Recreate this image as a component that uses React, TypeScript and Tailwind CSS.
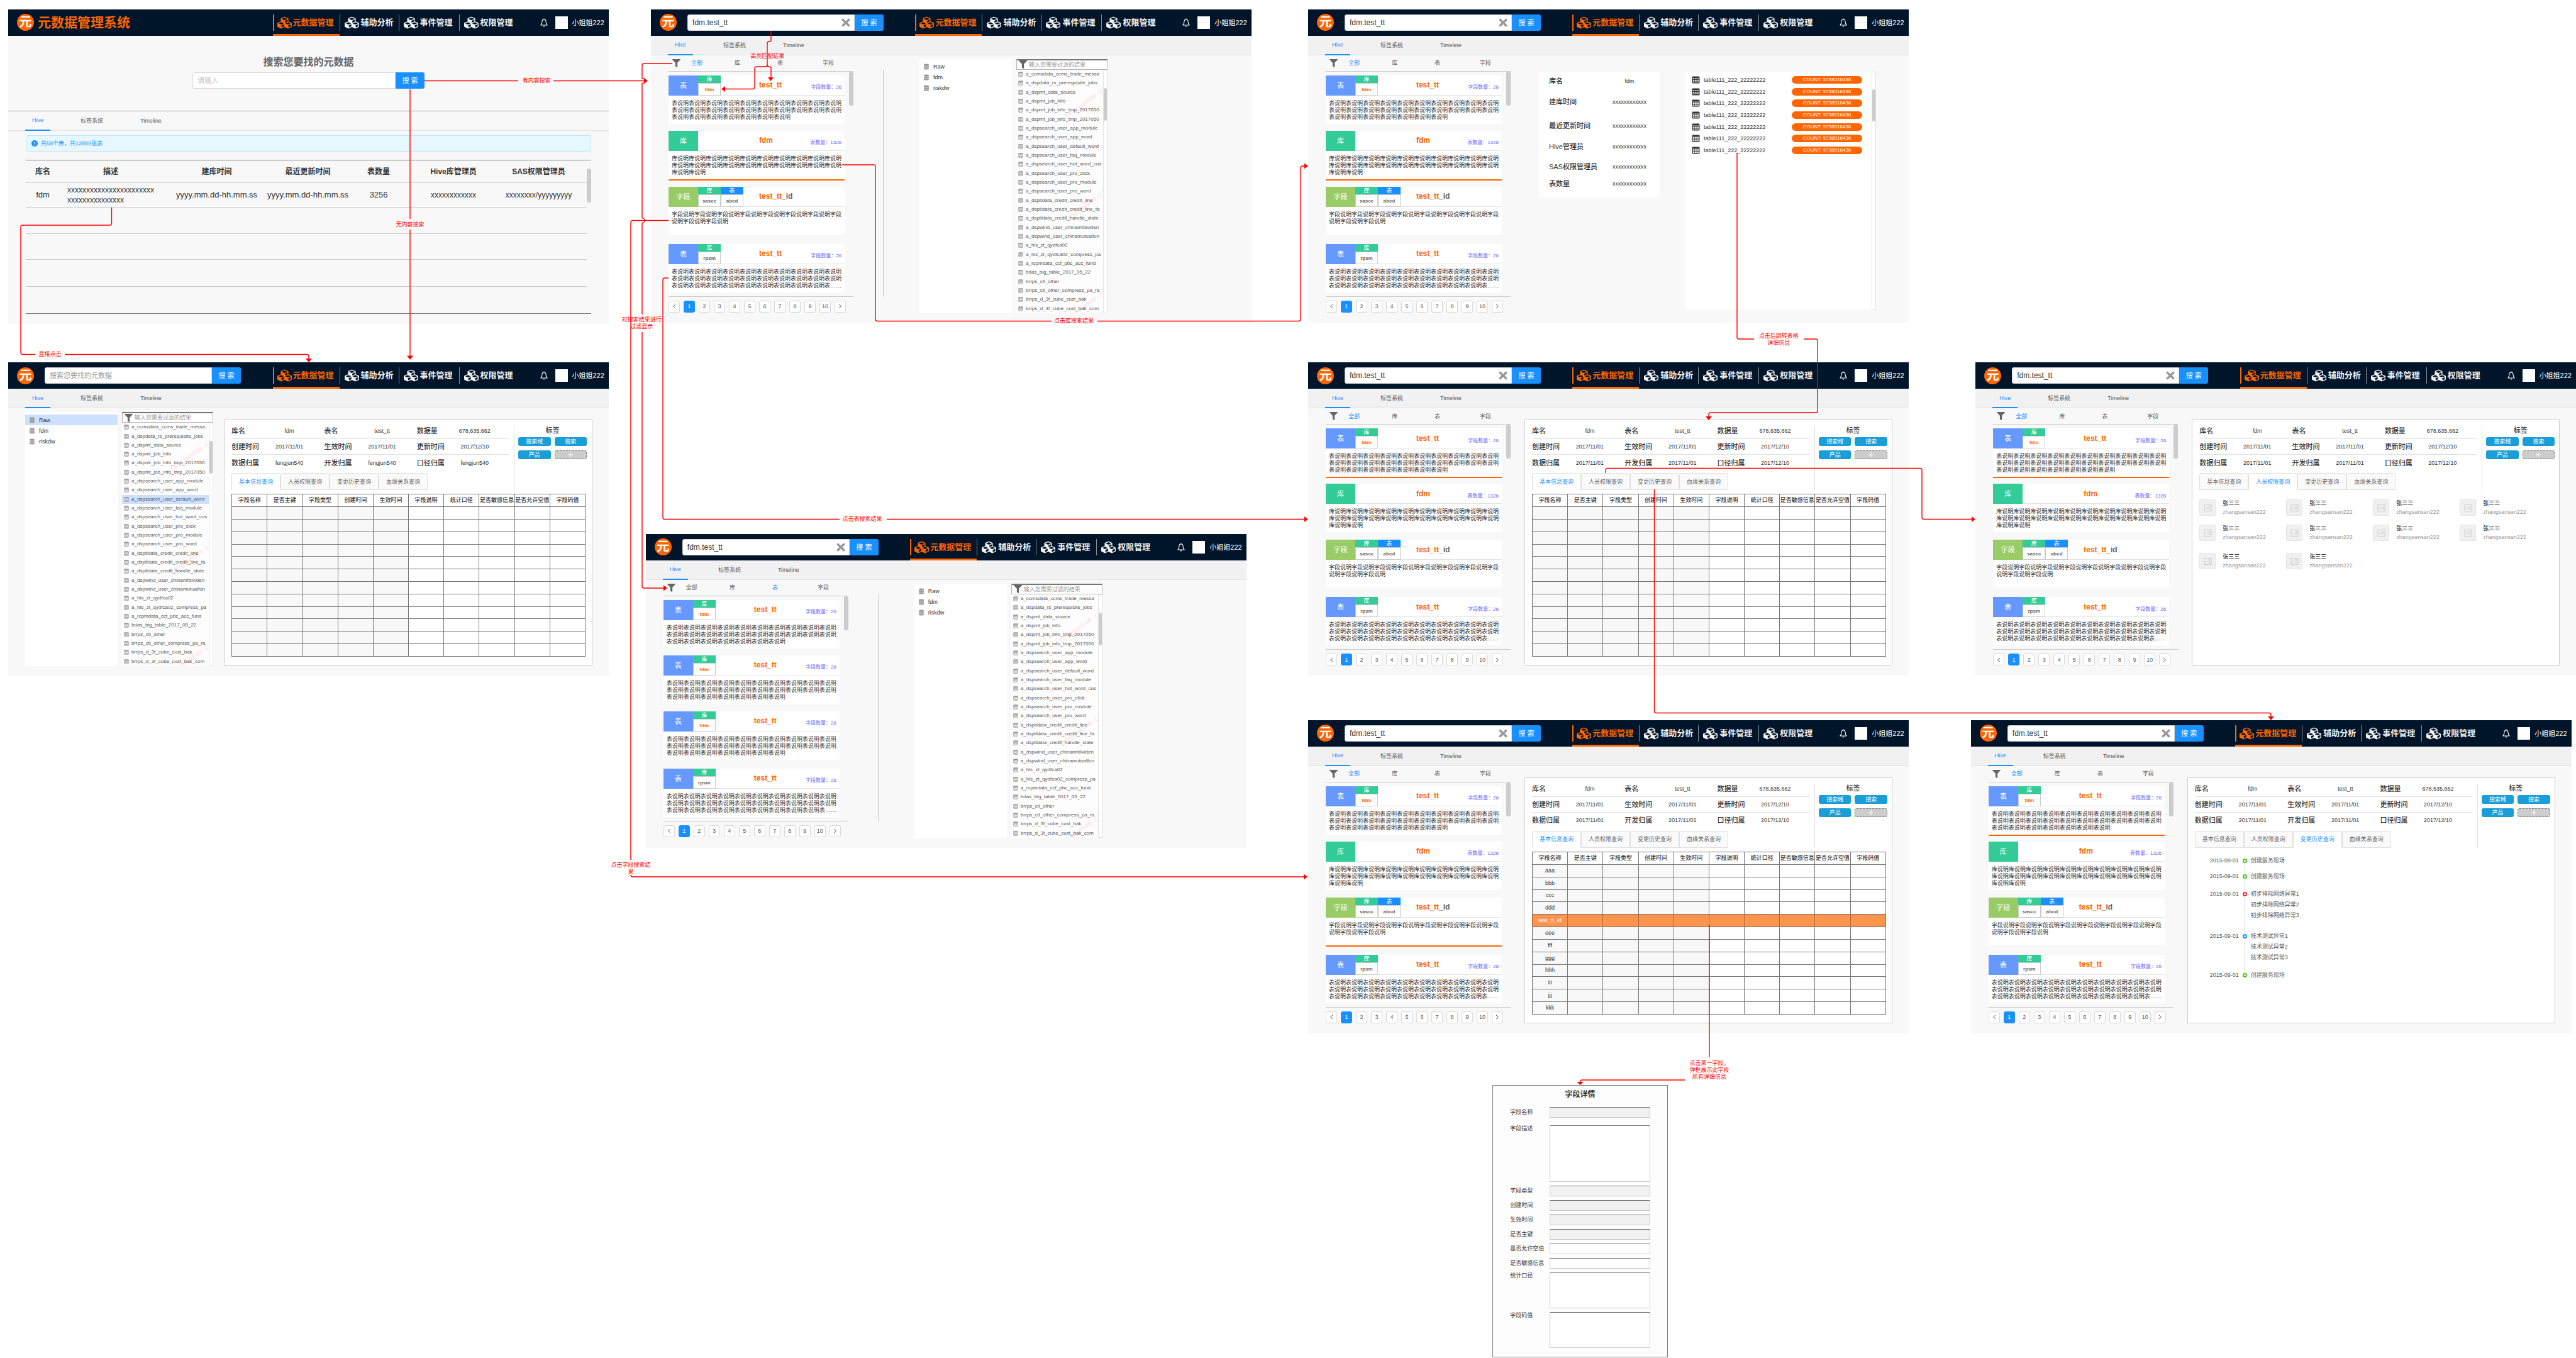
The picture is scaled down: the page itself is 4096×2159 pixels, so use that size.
import React from "react";
import { FaDatabase, FaFilter } from "react-icons/fa";

type Kind = "table" | "lib" | "field";

interface Result {
  kind: Kind;
  tags: { kind: Kind; value: string; hit?: boolean }[];
  hit: string;
  rest?: string;
  count?: string;
  text: string;
}

const kindLabel: Record<Kind, string> = { table: "表", lib: "库", field: "字段" };
const kindBg: Record<Kind, string> = {
  table: "bg-[#6699ff]",
  lib: "bg-[#33cc99]",
  field: "bg-[#99cc66]",
};
const tagBg: Record<Kind, string> = {
  table: "bg-[#1890ff]",
  lib: "bg-[#33cc99]",
  field: "bg-[#99cc66]",
};

const tableResult: Result = {
  kind: "table",
  tags: [{ kind: "lib", value: "fdm", hit: true }],
  hit: "test_tt",
  count: "字段数量：26",
  text: "表说明".repeat(27),
};
const longTableResult: Result = {
  kind: "table",
  tags: [{ kind: "lib", value: "rpsm" }],
  hit: "test_tt",
  count: "字段数量：26",
  text: "表说明".repeat(29) + "表……",
};
const libResult: Result = {
  kind: "lib",
  tags: [],
  hit: "fdm",
  count: "表数量：1326",
  text: "库说明".repeat(22),
};
const fieldResult: Result = {
  kind: "field",
  tags: [
    { kind: "lib", value: "sascc" },
    { kind: "table", value: "abcd" },
  ],
  hit: "test_tt",
  rest: "_id",
  text: "字段说明".repeat(10),
};
const mixedResults = [tableResult, libResult, fieldResult, longTableResult];
const tableResults = [tableResult, tableResult, tableResult, longTableResult];

const hiveTables = [
  "a_ccmsdata_ccms_trade_messa",
  "a_dspdata_rs_prerequisite_jobs",
  "a_dspmt_data_source",
  "a_dspmt_job_info",
  "a_dspmt_job_info_tmp_2017050",
  "a_dspmt_job_info_tmp_2017050",
  "a_dspsearch_user_app_module",
  "a_dspsearch_user_app_word",
  "a_dspsearch_user_default_word",
  "a_dspsearch_user_faq_module",
  "a_dspsearch_user_hot_word_cus",
  "a_dspsearch_user_pro_click",
  "a_dspsearch_user_pro_module",
  "a_dspsearch_user_pro_word",
  "a_dsptldata_credit_credit_line",
  "a_dsptldata_credit_credit_line_fa",
  "a_dsptldata_credit_handle_state",
  "a_dspwind_user_chinamfdividen",
  "a_dspwind_user_chinamutualfun",
  "a_his_zt_qydfca02",
  "a_his_zt_qydfca02_compress_pa",
  "a_rcpmdata_ccf_pbc_acc_fund",
  "bdas_big_table_2017_05_22",
  "brrps_ctl_other",
  "brrps_ctl_other_compress_pa_ra",
  "brrps_d_3f_cube_cust_bak",
  "brrps_d_3f_cube_cust_bak_com",
];

const fieldColumns = [
  "字段名称",
  "是否主键",
  "字段类型",
  "创建时间",
  "生效时间",
  "字段说明",
  "统计口径",
  "是否敏感信息",
  "是否允许空值",
  "字段码值",
];

function Cubes() {
  return (
    <svg viewBox="0 0 2176 1792" className="h-[20px] w-[23px] shrink-0" fill="currentColor" aria-hidden="true">
      <path d="M640 1632l384-192v-314l-384 164v342zm-64-454l404-173-404-173-404 173zm1088 454l384-192v-314l-384 164v342zm-64-454l404-173-404-173-404 173zm-448-293l384-165v-266l-384 164v267zm-64-379l441-189-441-189-441 189zm1088 518v416q0 36-19 67t-52 47l-448 224q-25 14-57 14t-57-14l-448-224q-4-2-7-4-2 2-7 4l-448 224q-25 14-57 14t-57-14l-448-224q-33-16-52-47t-19-67v-416q0-38 21.5-70t56.5-48l434-186v-400q0-38 21.5-70t56.5-48l448-192q23-10 50-10t50 10l448 192q35 16 56.5 48t21.5 70v400l434 186q36 16 57 48t21 70z" />
    </svg>
  );
}

function Bell() {
  return (
    <svg viewBox="0 0 24 24" className="size-[14px]" fill="none" stroke="currentColor" strokeWidth="1.8" strokeLinejoin="round" aria-hidden="true">
      <path d="M12 3.2c-3.4 0-5 2.6-5.2 6-.2 4.200-.8 6.600-3.600 9.600h17.600c-2.800-3-3.400-5.400-3.600-9.600-.2-3.400-1.800-6-5.200-6Z" />
      <path d="M12 1v2.200M10.200 20.800c.2 1 .9 1.600 1.800 1.600s1.600-.6 1.800-1.600" />
    </svg>
  );
}

function GridGlyph({ className, tall }: { className: string; tall?: boolean }) {
  const cellHeight = tall ? 3 : 3.4;
  const pitch = tall ? 5 : 5.2;
  return (
    <svg viewBox="0 0 24 24" className={className} preserveAspectRatio="none" aria-hidden="true">
      <rect x="1" y="1" width="22" height="22" rx="2.5" fill="currentColor" />
      {[0, 1, 2].map((r) =>
        [0, 1, 2].map((c) => (
          <rect key={`${r}-${c}`} x={3.4 + c * 6.2} y={7 + r * pitch} width="4.6" height={cellHeight} fill="#fff" />
        ))
      )}
    </svg>
  );
}

function Header({ search, wide, line }: { search?: { value?: string; placeholder?: string }; wide?: boolean; line?: boolean }) {
  const items = [
    { label: "辅助分析", cls: "w-[94px] gap-[3px]" },
    { label: "事件管理", cls: "w-[96px] gap-[3px]" },
    { label: "权限管理", cls: "w-[87px] gap-[3px]" },
  ];
  return (
    <header className="flex h-[42px] items-center bg-[#001529] pl-[14px] pr-[7px] text-white">
      <span className="flex size-[27px] shrink-0 items-center justify-center rounded-full bg-[#ff6600] text-[20px] font-bold leading-[27px]">
        元
      </span>
      {wide && <h1 className="ml-[6px] whitespace-nowrap text-[21px] font-bold leading-[27px] text-[#ff6600]">元数据管理系统</h1>}
      {search && (
        <form className="ml-[17px] flex h-[26px] w-[312px]">
          <div className="flex flex-1 items-center rounded-l-[3px] border border-[#d9d9d9] bg-white pl-[7px] pr-[6px]">
            <input
              type="text"
              aria-label="搜索元数据"
              defaultValue={search.value}
              placeholder={search.placeholder}
              className={
                search.value
                  ? "h-full min-w-0 flex-1 text-[12px] text-[#333] outline-none"
                  : "h-full min-w-0 flex-1 text-[11px] text-[#333] outline-none placeholder:text-[#999]"
              }
            />
            {search.value && (
              <button type="button" aria-label="清空" className="text-[#999]">
                <svg viewBox="0 0 14 14" className="size-[14px]" stroke="currentColor" strokeWidth="3.6" strokeLinecap="round" aria-hidden="true">
                  <path d="M2.4 2.4l9.2 9.2M11.600 2.4l-9.200 9.200" />
                </svg>
              </button>
            )}
          </div>
          <button type="button" className="w-[46px] rounded-r-[3px] bg-[#1890ff] text-[11px] leading-[26px] text-white">
            搜 索
          </button>
        </form>
      )}
      <nav className="ml-auto mr-[41px] flex h-full items-center">
        <a href="#meta" className="relative flex h-full w-[106px] items-center gap-[2px] pl-[7px] text-[#ff6600]">
          <span className="absolute left-0 top-[8px] h-[26px] w-[2px] bg-[#ff6600]" />
          <Cubes />
          <span className="whitespace-nowrap text-[13px] font-bold leading-[20px]">元数据管理</span>
          <span className="absolute inset-x-0 bottom-0 h-[3px] bg-[#ff6600]" />
        </a>
        {items.map((item) => (
          <a key={item.label} href="#nav" className={`flex h-[26px] items-center border-l border-[#8c8c8c] pl-[7px] text-[#f2f2f2] ${item.cls}`}>
            <Cubes />
            <span className="whitespace-nowrap text-[13px] font-bold leading-[20px]">{item.label}</span>
          </a>
        ))}
      </nav>
      <button type="button" aria-label="通知" className="shrink-0 text-white">
        <Bell />
      </button>
      <span className="ml-[11px] flex size-[20px] shrink-0 items-center bg-white">
        {line && <span className="h-px w-full bg-[#fde3df]" />}
      </span>
      <span className="ml-[7px] whitespace-nowrap text-[11px] leading-[20px]">小姐姐222</span>
    </header>
  );
}

function SystemTabs({ plain }: { plain?: boolean }) {
  return (
    <div
      role="tablist"
      className={`flex h-[31px] gap-[37px] border-b border-[#e4e4e4] pl-[27px] text-[9px] text-[#595959] ${plain ? "bg-[#f8f8f8]" : "bg-[#f1f1f1]"}`}
    >
      <button type="button" role="tab" aria-selected="true" className="h-[31px] border-b-2 border-[#1890ff] px-[11px] text-[#1890ff]">
        Hive
      </button>
      <button type="button" role="tab" className="px-[11px]">
        标签系统
      </button>
      <button type="button" role="tab" className="px-[11px]">
        Timeline
      </button>
    </div>
  );
}

function Board({ className, children }: { className: string; children: React.ReactNode }) {
  return <section className={`absolute w-[23.31%] overflow-hidden bg-[#f8f8f8] pb-[16px] ${className}`}>{children}</section>;
}

function ResultCard({ item, active }: { item: Result; active: boolean }) {
  return (
    <article className={`self-start bg-white ${active ? "border-b-2 border-[#ff6600]" : ""}`}>
      <div className="flex h-[32px]">
        <span className={`flex w-[47px] shrink-0 items-center justify-center text-[11px] text-white ${kindBg[item.kind]}`}>
          {kindLabel[item.kind]}
        </span>
        <div className="flex w-[97px] shrink-0 border-b border-[#e4e4e4]">
          {item.tags.map((tag) => (
            <span key={tag.value} className="flex h-[32px] w-[36px] flex-col text-center">
              <span className={`h-[12px] text-[9px] leading-[12px] text-white ${tagBg[tag.kind]}`}>{kindLabel[tag.kind]}</span>
              <span
                className={`h-[20px] border border-[#ccc] bg-white text-[8px] font-bold leading-[19px] ${tag.hit ? "text-[#ff6600]" : "text-[#666]"}`}
              >
                {tag.value}
              </span>
            </span>
          ))}
        </div>
        <div className="flex flex-1 items-center justify-between border-b border-[#e4e4e4] pr-[5px]">
          <h3 className="text-[12px] font-bold text-[#666]">
            <span className="text-[#ff6600]">{item.hit}</span>
            {item.rest}
          </h3>
          <span className="pt-[8px] text-[8px] text-[#6666ff]">{item.count}</span>
        </div>
      </div>
      <p className="mx-[5px] mb-[5px] mt-[7px] min-h-[32px] break-all text-[9px] leading-[11px] text-[#333]">{item.text}</p>
    </article>
  );
}

function Results({ items, filter = "全部", active }: { items: Result[]; filter?: string; active?: number }) {
  const filters = [
    { label: "全部", cls: "ml-[17px]" },
    { label: "库", cls: "ml-[51px]" },
    { label: "表", cls: "ml-[59px]" },
    { label: "字段", cls: "ml-[63px]" },
  ];
  return (
    <div className="w-[294px] shrink-0">
      <div className="flex h-[25px] items-center pl-[6px] text-[9px] text-[#666]">
        <FaFilter className="size-[13px]" />
        {filters.map((f) => (
          <button key={f.label} type="button" className={`${f.cls} ${f.label === filter ? "text-[#1890ff]" : ""}`}>
            {f.label}
          </button>
        ))}
      </div>
      <div className="flex h-[359px] justify-between border-y border-[#ccc]">
        <div className="grid w-[280px] grid-rows-[88px_89px_91px_77px] pt-[6px]">
          {items.map((item, i) => (
            <ResultCard key={i} item={item} active={i === active} />
          ))}
        </div>
        <span className="h-[54px] w-[7px] rounded-[3px] bg-[#ccc]" />
      </div>
      <div className="mt-[6px] flex gap-[6px] text-[9px] text-[#595959]">
        {["‹", "1", "2", "3", "4", "5", "6", "7", "8", "9", "10", "›"].map((p) => (
          <button
            key={p}
            type="button"
            aria-label={p === "‹" ? "上一页" : p === "›" ? "下一页" : `第${p}页`}
            className={`flex h-[19px] w-[18px] items-center justify-center rounded-[3px] border ${
              p === "1" ? "border-[#1890ff] bg-[#1890ff] text-white" : "border-[#d9d9d9] bg-white"
            }`}
          >
            {p === "‹" || p === "›" ? (
              <svg viewBox="0 0 8 8" className="size-[8px]" fill="none" stroke="currentColor" aria-hidden="true">
                <path d={p === "‹" ? "M6 1 2.500 4 6 7" : "M2 1l3.500 3L2 7"} />
              </svg>
            ) : (
              p
            )}
          </button>
        ))}
      </div>
    </div>
  );
}

function Explorer({ db, table }: { db?: string; table?: string }) {
  return (
    <div className="mt-[6px] flex h-[404px] gap-[7px]">
      <ul className="w-[147px] bg-white pt-[4px] text-[9px] text-[#333]">
        {["Raw", "fdm", "riskdw"].map((name) => (
          <li key={name} className={`flex h-[17px] items-center gap-[7px] pl-[7px] ${name === db ? "bg-[#cce0ff]" : ""}`}>
            <FaDatabase className="h-[10px] w-[8px] text-[#999]" />
            {name}
          </li>
        ))}
      </ul>
      <div className="flex w-[145px] flex-col bg-[#fdfdfd]">
        <label className="flex h-[17px] shrink-0 items-center gap-[3px] border border-t-2 border-[#b5b5b5] border-t-[#767676] bg-white pl-[3px]">
          <FaFilter className="size-[13px] shrink-0 text-[#666]" />
          <input
            type="text"
            aria-label="过滤表"
            placeholder="输入您需要过滤的结果"
            className="h-[12px] min-w-0 flex-1 text-[9px] leading-[12px] outline-none placeholder:text-[#999]"
          />
        </label>
        <div className="flex min-h-0 flex-1">
          <ul className="relative flex min-w-0 flex-1 flex-col overflow-hidden text-[8px] text-[#595959]">
            {hiveTables.map((name, i) => (
              <li key={i} className={`flex min-h-0 flex-1 items-center pl-[3px] ${name === table ? "bg-[#cce0ff]" : ""}`}>
                <GridGlyph className="size-[8px] shrink-0 text-[#999]" />
                <span className="ml-[4px] whitespace-nowrap leading-[12px]">{name}</span>
              </li>
            ))}
            {["top-[47px]", "top-[211px]", "top-[370px]"].map((top) => (
              <li
                key={top}
                aria-hidden="true"
                className={`absolute left-[71px] ${top} -rotate-[35deg] whitespace-nowrap font-['Liberation_Mono'] text-[10px] italic text-[#ff0000]/15`}
              >
                fengjun540-17
              </li>
            ))}
          </ul>
          <div className="w-[7px] border border-[#e4e4e4] bg-white pt-[28px]">
            <span className="block h-[52px] rounded-[3px] bg-[#ccc]" />
          </div>
        </div>
      </div>
    </div>
  );
}

function Split() {
  return <div className="ml-[47px] mt-[23px] h-[361px] w-px bg-[#ccc]" />;
}

const dates = ["2017/11/01", "2017/11/01", "2017/12/10"];
const owners = ["fengjun540", "fengjun540", "fengjun540"];

function TableDetail({ tab, owner, children }: { tab: number; owner?: boolean; children: React.ReactNode }) {
  const last = owner ? owners : dates;
  const rows = [
    [["库名", "fdm"], ["表名", "test_tt"], ["数据量", "678,635,662"]],
    [["创建时间", dates[0]], ["生效时间", dates[1]], ["更新时间", dates[2]]],
    [["数据归属", last[0]], ["开发归属", last[1]], ["口径归属", last[2]]],
  ];
  const tabs = ["基本信息查询", "人员权限查询", "变更历史查询", "血缘关系查询"];
  return (
    <div className="mr-[26px] mt-[18px] min-h-[386px] flex-1 border border-[#ccc] bg-white">
      <div className="flex">
        <div className="w-[453px] pl-[11px] pt-[5px]">
          <dl>
            {rows.map((row, i) => (
              <div key={i} className={`flex h-[25px] items-center ${i < 2 ? "border-b border-[#e0e0e0]" : ""}`}>
                {row.map(([k, v]) => (
                  <div key={k} className="flex w-[151px] items-center">
                    <dt className="w-[60px] whitespace-nowrap text-[11px] font-medium text-[#333]">{k}</dt>
                    <dd className="w-[64px] text-center text-[9px] text-[#333]">{v}</dd>
                  </div>
                ))}
              </div>
            ))}
          </dl>
          <div role="tablist" className="mt-[4px] flex">
            {tabs.map((t, i) => (
              <button
                key={t}
                type="button"
                role="tab"
                aria-selected={i === tab}
                className={`h-[27px] w-[78px] rounded-t-[3px] border border-[#e0e0e0] text-[9px] ${
                  i === tab ? "border-b-white bg-white text-[#1890ff]" : "bg-[#fafafa] text-[#666]"
                }`}
              >
                {t}
              </button>
            ))}
          </div>
        </div>
        <aside className="ml-[7px] mt-[9px] border-l border-[#e0e0e0] pl-[6px]">
          <h3 className="text-center text-[11px] font-medium leading-[14px] text-[#333]">标签</h3>
          <div className="mt-[4px] grid w-[109px] grid-cols-2 gap-x-[6px] gap-y-[7px] text-[9px] leading-[14px] text-white">
            {["搜索域", "搜索", "产品"].map((t) => (
              <button key={t} type="button" className="h-[14px] rounded-[3px] bg-[#199ed8]">
                {t}
              </button>
            ))}
            <button
              type="button"
              aria-label="添加标签"
              className="flex h-[14px] items-center justify-center rounded-[3px] border border-dashed border-[#777] bg-[#ccc]"
            >
              <svg viewBox="0 0 8 8" className="size-[8px]" stroke="currentColor" aria-hidden="true">
                <path d="M4 0v8M0 4h8" />
              </svg>
            </button>
          </div>
        </aside>
      </div>
      {children}
    </div>
  );
}

function FieldTable({ names, highlight }: { names?: string[]; highlight?: number }) {
  return (
    <table className="ml-[11px] mt-[6px] h-[259px] w-[563px] table-fixed border-collapse text-center text-[9px] leading-[11px] text-[#333]">
      <thead>
        <tr>
          {fieldColumns.map((c) => (
            <th key={c} className="h-[20px] whitespace-nowrap border border-[#777] p-0 font-medium">
              {c}
            </th>
          ))}
        </tr>
      </thead>
      <tbody>
        {Array.from({ length: 12 }).map((_, r) => (
          <tr key={r} className={r === highlight ? "bg-[#ff944d] text-white" : ""}>
            {fieldColumns.map((c, i) => (
              <td
                key={c}
                className={`h-[19px] border p-0 ${r === highlight ? "border-x-[#b36b3b] border-y-[#777]" : "border-[#777]"} ${
                  i < 5 && r !== highlight ? "bg-[#f8f8f8]" : ""
                }`}
              >
                {i === 0 ? names?.[r] : null}
              </td>
            ))}
          </tr>
        ))}
      </tbody>
    </table>
  );
}

function HomeBoard() {
  const cols = ["w-[54px]", "w-[162px]", "w-[160px]", "w-[145px]", "w-[80px]", "w-[158px]", ""];
  const heads = ["库名", "描述", "建库时间", "最近更新时间", "表数量", "Hive库管理员", "SAS权限管理员"];
  const pads = ["", "", "pl-[15px]", "", "", "", "pr-[20px]"];
  return (
    <Board className="left-[0.32%] top-[0.69%]">
      <Header wide line />
      <form className="flex h-[120px] flex-col items-center border-b border-[#999] pt-[32px]">
        <label htmlFor="home-search" className="text-[16px] font-bold leading-[20px] text-[#666]">
          搜索您要找的元数据
        </label>
        <div className="mt-[6px] flex h-[26px] w-[369px]">
          <input
            id="home-search"
            type="text"
            placeholder="请输入"
            className="min-w-0 flex-1 rounded-l-[3px] border border-[#d9d9d9] bg-white px-[7px] text-[11px] outline-none placeholder:text-[#bfbfbf]"
          />
          <button type="button" className="w-[46px] rounded-r-[3px] bg-[#1890ff] text-[11px] text-white">
            搜 索
          </button>
        </div>
      </form>
      <SystemTabs plain />
      <div className="mx-[28px] mt-[7px] flex h-[26px] items-center gap-[5px] rounded-[3px] border border-[#bae7ff] bg-[#e6f7ff] pl-[8px] text-[9px] text-[#1890ff]">
        <span className="flex size-[10px] items-center justify-center rounded-full bg-[#1890ff] text-[8px] font-bold leading-[10px] text-white">i</span>
        共58个库，共12888张表
      </div>
      <div className="mx-[28px] mt-[13px] flex border-y border-[#777] pb-[42px]">
        <table className="flex-1 table-fixed border-collapse text-center text-[#333]">
          <colgroup>
            {cols.map((c, i) => (
              <col key={i} className={c} />
            ))}
          </colgroup>
          <thead>
            <tr className="h-[36px] border-b border-[#ccc] text-[12px]">
              {heads.map((h, i) => (
                <th key={h} className={`whitespace-nowrap p-0 font-bold ${pads[i]}`}>
                  {h}
                </th>
              ))}
            </tr>
          </thead>
          <tbody className="text-[13px]">
            <tr className="h-[39px] border-b border-[#ccc]">
              <td className="p-0">fdm</td>
              <td className="p-0 pl-[12px] text-left text-[12px] leading-[16px]">
                xxxxxxxxxxxxxxxxxxxxxxx
                <br />
                xxxxxxxxxxxxxxx
              </td>
              <td className="whitespace-nowrap p-0 pl-[15px]">yyyy.mm.dd-hh.mm.ss</td>
              <td className="whitespace-nowrap p-0">yyyy.mm.dd-hh.mm.ss</td>
              <td className="p-0">3256</td>
              <td className="p-0 text-[12px]">xxxxxxxxxxxx</td>
              <td className="p-0 pr-[20px] text-[12px]">xxxxxxxx/yyyyyyyyy</td>
            </tr>
            <tr className="h-[42px] border-b border-[#ccc]">
              <td colSpan={7} />
            </tr>
            <tr className="h-[41px] border-b border-[#ccc]">
              <td colSpan={7} />
            </tr>
            <tr className="h-[43px] border-b border-[#ccc]">
              <td colSpan={7} />
            </tr>
          </tbody>
        </table>
        <span className="mt-[13px] h-[54px] w-[7px] rounded-[3px] bg-[#ccc]" />
      </div>
    </Board>
  );
}

function SearchBoard({ className, line, children }: { className: string; line?: boolean; children: React.ReactNode }) {
  return (
    <Board className={className}>
      <Header search={{ value: "fdm.test_tt" }} line={line} />
      <SystemTabs />
      <div className="flex pl-[28px]">{children}</div>
    </Board>
  );
}

function LibraryDetail() {
  const rows = [
    ["库名", "fdm"],
    ["建库时间", "xxxxxxxxxxxx"],
    ["最近更新时间", "xxxxxxxxxxxx"],
    ["Hive管理员", "xxxxxxxxxxxx"],
    ["SAS权限管理员", "xxxxxxxxxxxx"],
    ["表数量", "xxxxxxxxxxxx"],
  ];
  return (
    <>
      <dl className="ml-[45px] mt-[26px] grid h-[200px] w-[192px] grid-rows-[31px_35px_40px_26px_38px_17px] bg-white pl-[16px] text-[#333]">
        {rows.map(([k, v]) => (
          <div key={k} className="flex items-center">
            <dt className="w-[96px] whitespace-nowrap text-[11px] font-medium">{k}</dt>
            <dd className="w-[64px] text-center text-[9px]">{v}</dd>
          </div>
        ))}
      </dl>
      <div className="ml-[40px] mt-[26px] flex h-[378px] w-[304px] bg-white">
        <ul className="flex h-[131px] flex-1 flex-col justify-between pl-[11px] pr-[15px] pt-[7px] text-[9px] text-[#333]">
          {Array.from({ length: 7 }).map((_, i) => (
            <li key={i} className="flex h-[12px] items-center">
              <GridGlyph tall className="h-[12px] w-[13px] text-[#333]" />
              <span className="ml-[6px]">table111_222_22222222</span>
              <span className="ml-auto w-[112px] rounded-full bg-[#ff6600] text-center text-[8px] leading-[12px] text-white">COUNT: 5738516436</span>
            </li>
          ))}
        </ul>
        <div className="w-[7px] border border-[#e0e0e0] bg-white pt-[27px]">
          <span className="block h-[51px] rounded-[3px] bg-[#ccc]" />
        </div>
      </div>
    </>
  );
}

function People() {
  return (
    <ul className="ml-[11px] mt-[15px] grid grid-cols-[138px_138px_138px_138px] grid-rows-[40px_45px_27px]">
      {Array.from({ length: 10 }).map((_, i) => (
        <li key={i} className="flex items-start gap-[11px]">
          <span className="flex size-[26px] items-center justify-center rounded-[2px] border border-[#e4e4e4] bg-[#f0f0f0] text-[#ccc]">
            <svg viewBox="0 0 14 14" className="size-[13px]" fill="none" stroke="currentColor" aria-hidden="true">
              <rect x="1" y="1.500" width="12" height="11" />
              <circle cx="9.500" cy="4.800" r="1.200" />
              <path d="M1.500 9.500 4.800 6l3 3.500L10 7.500l2.500 3" />
            </svg>
          </span>
          <span className="text-[9px]">
            <span className="block font-medium leading-[12px] text-[#333]">张三三</span>
            <span className="block pt-[2px] leading-[12px] text-[#999]">zhangsansan222</span>
          </span>
        </li>
      ))}
    </ul>
  );
}

function History() {
  const events = [
    { cls: "h-[25px]", dot: "border-[#52c41a]", lines: ["创建服务现场"] },
    { cls: "h-[28px]", dot: "border-[#52c41a]", lines: ["创建服务现场"] },
    { cls: "h-[67px]", dot: "border-[#f5222d]", lines: ["初步排除网络异常1", "初步排除网络异常2", "初步排除网络异常3"] },
    { cls: "h-[62px]", dot: "border-[#1890ff]", lines: ["技术测试异常1", "技术测试异常2", "技术测试异常3"] },
    { cls: "h-[18px]", dot: "border-[#52c41a]", lines: ["创建服务现场"] },
  ];
  return (
    <ol className="ml-[33px] mt-[12px] text-[9px] leading-[17px] text-[#595959]">
      {events.map((e, i) => (
        <li key={i} className={`flex ${e.cls}`}>
          <time className="w-[48px] whitespace-nowrap text-right">2015-09-01</time>
          <span className="ml-[6px] mr-[6px] flex w-[7px] flex-col items-center">
            <span className={i === 0 ? "h-[5px] shrink-0" : "h-[5px] w-px shrink-0 bg-[#d9d9d9]"} />
            <span className={`size-[7px] shrink-0 rounded-full border-2 bg-white ${e.dot}`} />
            {i < events.length - 1 && <span className="w-px flex-1 bg-[#d9d9d9]" />}
          </span>
          <span>
            {e.lines.map((l) => (
              <span key={l} className="block whitespace-nowrap">
                {l}
              </span>
            ))}
          </span>
        </li>
      ))}
    </ol>
  );
}

function FieldForm() {
  const rows = [
    { label: "字段名称", area: "", off: true, gap: "mb-[12px]" },
    { label: "字段描述", area: "h-[90px]", off: false, gap: "mb-[6px]" },
    { label: "字段类型", area: "", off: true, gap: "mb-[6px]" },
    { label: "创建时间", area: "", off: true, gap: "mb-[6px]" },
    { label: "生效时间", area: "", off: true, gap: "mb-[6px]" },
    { label: "是否主键", area: "", off: true, gap: "mb-[6px]" },
    { label: "是否允许空值", area: "", off: false, gap: "mb-[6px]" },
    { label: "是否敏感信息", area: "", off: false, gap: "mb-[6px]" },
    { label: "统计口径", area: "h-[57px]", off: false, gap: "mb-[6px]" },
    { label: "字段码值", area: "h-[57px]", off: false, gap: "" },
  ];
  const box = "w-[160px] resize-none border border-[#c8c8c8] border-t-[#767676] px-[3px] text-[9px] outline-none";
  return (
    <form className="absolute left-[57.94%] top-[79.9%] w-[6.8%] border border-[#777] bg-[#fdfdfd] pb-[14px] pl-[27px] text-[9px] text-[#333]">
      <h2 className="mb-[12px] mr-[27px] pt-[6px] text-center text-[12px] font-bold leading-[16px]">字段详情</h2>
      {rows.map((r, i) => (
        <div key={r.label} className={`flex ${r.gap}`}>
          <label htmlFor={`field-${i}`} className={`w-[63px] whitespace-nowrap ${r.area ? "leading-[11px]" : "leading-[17px]"}`}>
            {r.label}
          </label>
          {r.area ? (
            <textarea id={`field-${i}`} className={`${box} ${r.area} bg-white`} />
          ) : (
            <input id={`field-${i}`} type="text" disabled={r.off} className={`${box} h-[17px] ${r.off ? "bg-[#f1f1f1]" : "bg-white"}`} />
          )}
        </div>
      ))}
    </form>
  );
}

const wires = [
  "M675 128.500H824",
  "M880 128.500H1027",
  "M652 142V348",
  "M652 365V568",
  "M177.500 330V355q0 3-3 3H36q-3 0-3 3V560.500q0 3 3 3H56",
  "M103 563.500H488q3 0 3 3V572",
  "M1226 49V63q0 3-3 3t-3 3V103q0 3 3 3t3 3V124",
  "M1220 103q0 3-3 3H1203q-3 0-3 3V138.500q0 3-3 3H1151",
  "M1069 101H1024q-3 0-3 3V124.500a4 4 0 0 1 0 8V346.500a4 4 0 0 1 0 8V500",
  "M1021 528V932q0 3 3 3H1056",
  "M1063 350.500H1006q-3 0-3 3V1367",
  "M1003 1391q0 3 3 3H2075",
  "M1063 442H1057q-3 0-3 3V822.500q0 3 3 3H1335",
  "M1410 825.500H2076",
  "M1339 262H1389q3 0 3 3V507.500q0 3 3 3H1672",
  "M1745 510.500H2065q3 0 3-3V267q0-3 3-3H2076",
  "M2762 243V536q0 3 3 3H2789",
  "M2868 539H2887q3 0 3 3V653q0 3-3 3H2720q-3 0-3 3V663",
  "M2553 752V747.500q0-3 3-3H3053q3 0 3 3V822.500q0 3 3 3H3137",
  "M2630.500 778V1130.500q0 3 3 3H3608q3 0 3 3V1141",
  "M2718 1471V1681",
  "M2679 1717H2515.500q-3 0-3 3V1721",
];
const arrows = [
  "M1030 128.500l-6-4.500v9z",
  "M652 572l-5-6.500h10z",
  "M491 576l-5-6h10z",
  "M1225.500 129l-4.500-6h9z",
  "M1147 141.500l6-4.500v9z",
  "M1061 935l-6-4.500v9z",
  "M2079 1394l-6-4.500v9z",
  "M2080 825.500l-6-4.500v9z",
  "M2080 264l-6-4.500v9z",
  "M2717 668l-5-6h10z",
  "M3141 825.500l-6-4.500v9z",
  "M3611 1145l-5-6h10z",
  "M2512.500 1725l-5-5h10z",
];
const notes = [
  { at: "left-[20.83%] top-[5.95%]", lines: ["有内容搜索"] },
  { at: "left-[15.92%] top-[16.53%]", lines: ["无内容搜索"] },
  { at: "left-[1.94%] top-[26.1%]", lines: ["直接点击"] },
  { at: "left-[29.79%] top-[4.1%]", lines: ["高亮匹配结果"] },
  { at: "left-[24.91%] top-[23.83%]", lines: ["对搜索结果进行", "过滤显示"] },
  { at: "left-[24.49%] top-[63.96%]", lines: ["点击字段搜索结", "果"] },
  { at: "left-[33.47%] top-[38.23%]", lines: ["点击表搜索结果"] },
  { at: "left-[41.69%] top-[23.64%]", lines: ["点击库搜索结果"] },
  { at: "left-[69.05%] top-[24.99%]", lines: ["点击后跳转表格", "详细信息"] },
  { at: "left-[66.36%] top-[78.78%]", lines: ["点击某一字段，", "弹框展示此字段", "所有详细信息"] },
];

function Flow() {
  return (
    <>
      <svg viewBox="0 0 4096 2159" className="pointer-events-none absolute inset-0 size-full" aria-hidden="true">
        <g fill="none" stroke="#ff0000" strokeWidth="1.400">
          {wires.map((d) => (
            <path key={d} d={d} />
          ))}
        </g>
        <g fill="#ff0000">
          {arrows.map((d) => (
            <path key={d} d={d} />
          ))}
        </g>
      </svg>
      {notes.map((n) => (
        <p
          key={n.at}
          className={`absolute -translate-x-1/2 -translate-y-1/2 whitespace-nowrap text-center text-[9px] leading-[11px] text-[#ff0000] ${n.at}`}
        >
          {n.lines.map((l) => (
            <span key={l} className="block">
              {l}
            </span>
          ))}
        </p>
      ))}
    </>
  );
}

const fieldNames = ["aaa", "bbb", "ccc", "ddd", "test_tt_id", "eee", "fff", "ggg", "hhh", "iii", "jjj", "kkk"];

export default function App() {
  return (
    <main
      lang="zh-CN"
      className="relative aspect-[4096/2159] w-full overflow-hidden bg-white font-['Liberation_Sans','Noto_Sans_CJK_SC',sans-serif] leading-[12px]"
    >
      <HomeBoard />

      <SearchBoard className="left-[25.27%] top-[0.69%]" line>
        <Results items={mixedResults} active={1} />
        <Split />
        <div className="ml-[57px]">
          <Explorer />
        </div>
      </SearchBoard>

      <SearchBoard className="left-[50.78%] top-[0.69%]" line>
        <Results items={mixedResults} active={1} />
        <LibraryDetail />
      </SearchBoard>

      <Board className="left-[0.32%] top-[26.68%]">
        <Header search={{ placeholder: "搜索您要找的元数据" }} />
        <SystemTabs />
        <div className="flex pl-[27px]">
          <Explorer db="Raw" table="a_dspsearch_user_default_word" />
          <div className="ml-[17px] flex flex-1">
            <TableDetail tab={0} owner>
              <FieldTable />
            </TableDetail>
          </div>
        </div>
      </Board>

      <SearchBoard className="left-[50.78%] top-[26.68%]">
        <Results items={mixedResults} active={0} />
        <div className="ml-[22px] flex flex-1">
          <TableDetail tab={0}>
            <FieldTable />
          </TableDetail>
        </div>
      </SearchBoard>

      <SearchBoard className="left-[76.69%] top-[26.68%]">
        <Results items={mixedResults} active={0} />
        <div className="ml-[22px] flex flex-1">
          <TableDetail tab={1}>
            <People />
          </TableDetail>
        </div>
      </SearchBoard>

      <SearchBoard className="left-[25.07%] top-[39.32%]">
        <Results items={tableResults} filter="表" />
        <Split />
        <div className="ml-[57px]">
          <Explorer />
        </div>
      </SearchBoard>

      <SearchBoard className="left-[50.78%] top-[53.03%]">
        <Results items={mixedResults} active={2} />
        <div className="ml-[22px] flex flex-1">
          <TableDetail tab={0}>
            <FieldTable names={fieldNames} highlight={4} />
          </TableDetail>
        </div>
      </SearchBoard>

      <SearchBoard className="left-[76.51%] top-[53.03%]">
        <Results items={mixedResults} active={0} />
        <div className="ml-[22px] flex flex-1">
          <TableDetail tab={2}>
            <History />
          </TableDetail>
        </div>
      </SearchBoard>

      <FieldForm />
      <Flow />
    </main>
  );
}
